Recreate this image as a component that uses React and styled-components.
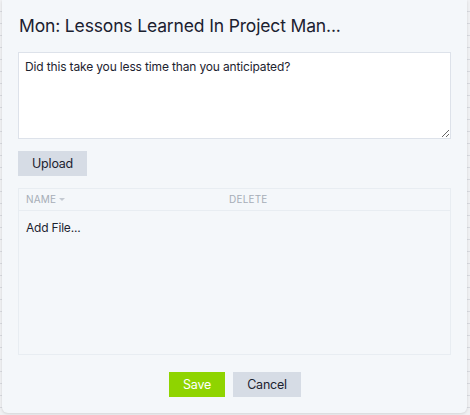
import styled, { createGlobalStyle } from 'styled-components';

const GlobalStyle = createGlobalStyle`
    html, body {
        margin: 0;
        padding: 0;
        background: #e4e6ea;
    }
    body {
        font-family: Inter, 'Noto Sans', sans-serif;
        color: #1d2330;
    }
`;

const Backdrop = styled.div`
    width: 470px;
    height: 415px;
    padding: 0 3px 2px 2px;
    box-sizing: border-box;
    background: repeating-linear-gradient(
        180deg,
        #f0f1f3 0px,
        #f0f1f3 11px,
        #d8dadf 11px,
        #d8dadf 12px
    );
`;

const Modal = styled.div`
    height: 100%;
    box-sizing: border-box;
    background: #f4f7fa;
    border-radius: 0 0 6px 6px;
    box-shadow: 0 1px 3px rgba(0, 0, 0, 0.12);
    padding: 14px 14px 16px 16px;
    display: flex;
    flex-direction: column;
`;

const Title = styled.h1`
    margin: 0 0 14px 1px;
    font-size: 17.5px;
    font-weight: 400;
    letter-spacing: -0.15px;
    line-height: 24px;
    color: #1b2130;
`;

const Notes = styled.textarea`
    display: block;
    width: 433px;
    height: 87px;
    box-sizing: border-box;
    margin: 0;
    padding: 5px 6px;
    border: 1px solid #dde2ea;
    background: #fff;
    font-family: Inter, 'Noto Sans', sans-serif;
    font-size: 12px;
    letter-spacing: -0.15px;
    line-height: 18px;
    color: #1d2330;
    resize: vertical;
    outline: none;
`;

const Button = styled.button`
    border: none;
    border-radius: 0;
    height: 25px;
    padding: 0 14px;
    font-family: Inter, 'Noto Sans', sans-serif;
    font-size: 12.5px;
    letter-spacing: -0.2px;
    color: ${({ $primary }) => ($primary ? '#fff' : '#1d2330')};
    background: ${({ $primary }) => ($primary ? '#8fd400' : '#d6dce5')};
    cursor: pointer;
`;

const UploadRow = styled.div`
    margin-top: 12px;
`;

const FileTable = styled.div`
    margin-top: 12px;
    width: 433px;
    height: 168px;
    box-sizing: border-box;
    border: 1px solid #e8edf2;
    display: flex;
    flex-direction: column;
`;

const HeadRow = styled.div`
    display: grid;
    grid-template-columns: 203px 1fr;
    height: 21px;
    align-items: center;
    padding-left: 7px;
    border-bottom: 1px solid #e8edf2;
    font-size: 10px;
    letter-spacing: 0.2px;
    color: #a6adb7;
    text-transform: uppercase;
`;

const HeadCell = styled.span`
    display: flex;
    align-items: center;
    gap: 3px;
`;

const SortCaret = styled.span`
    width: 0;
    height: 0;
    border-left: 3px solid transparent;
    border-right: 3px solid transparent;
    border-top: 3px solid #c4cad2;
`;

const AddFile = styled.div`
    padding: 9px 7px;
    font-size: 12px;
    letter-spacing: -0.2px;
    color: #1d2330;
`;

const Footer = styled.div`
    margin-top: 17px;
    display: flex;
    justify-content: center;
    gap: 8px;
    padding-right: 1px;
`;

export default function App() {
    return (
        <>
            <GlobalStyle />
            <Backdrop>
                <Modal>
                    <Title>Mon: Lessons Learned In Project Man...</Title>
                    <Notes defaultValue="Did this take you less time than you anticipated?" />
                    <UploadRow>
                        <Button>Upload</Button>
                    </UploadRow>
                    <FileTable>
                        <HeadRow>
                            <HeadCell>
                                Name <SortCaret />
                            </HeadCell>
                            <HeadCell>Delete</HeadCell>
                        </HeadRow>
                        <AddFile>Add File...</AddFile>
                    </FileTable>
                    <Footer>
                        <Button $primary>Save</Button>
                        <Button>Cancel</Button>
                    </Footer>
                </Modal>
            </Backdrop>
        </>
    );
}
